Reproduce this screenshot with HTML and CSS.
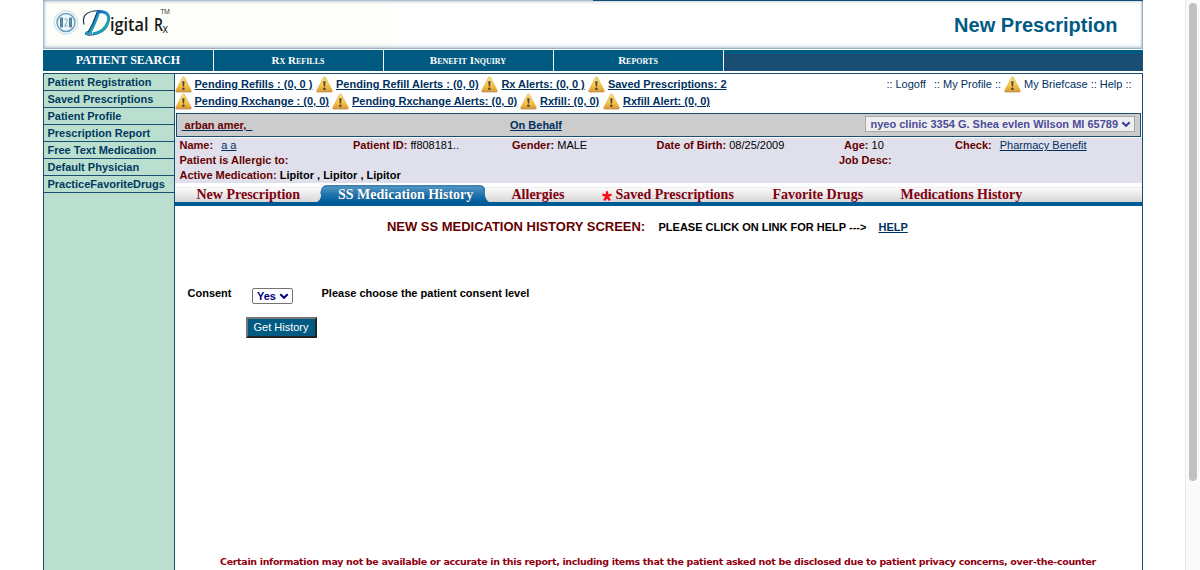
FILE: index.html
```html
<!DOCTYPE html>
<html lang="en">
<head>
<meta charset="utf-8">
<title>New Prescription</title>
<link rel="stylesheet" href="styles.css">
</head>
<body>
<svg class="defs" width="0" height="0" aria-hidden="true">
  <defs>
    <linearGradient id="amber" x1="0" y1="0" x2="0" y2="1"><stop offset="0" stop-color="#ffe277"/><stop offset=".55" stop-color="#f9c945"/><stop offset="1" stop-color="#e0992b"/></linearGradient>
    <linearGradient id="dee" x1="0" y1="0" x2="1" y2="1"><stop offset="0" stop-color="#1450b0"/><stop offset=".5" stop-color="#1590c5"/><stop offset="1" stop-color="#2fb39a"/></linearGradient>
    <linearGradient id="tab" x1="0" y1="0" x2="0" y2="1"><stop offset="0" stop-color="#5a9cc8"/><stop offset=".5" stop-color="#2577b0"/><stop offset="1" stop-color="#015c99"/></linearGradient>
    <symbol id="warn" viewBox="0 0 17 17"><path d="M7.7 1.2Q8.5.2 9.3 1.2L16.3 14.5Q16.7 15.8 15.5 15.8H1.4Q.2 15.8.7 14.5Z" fill="url(#amber)" stroke="#d9a652" stroke-width=".6"/><path d="M1 15.8H16" stroke="#a9844c" stroke-width=".8"/><path d="M7.2 5.3H9.6L9.1 10.5H7.8Z" fill="#4b4351"/><circle cx="8.4" cy="12.8" r="1.3" fill="#4b4351"/></symbol>
  </defs>
</svg>
<div class="page">
  <header class="banner">
    <svg class="logo" width="130" height="42" viewBox="0 0 130 42">
      <circle cx="23" cy="22.500" r="11.800" fill="#f2f9fc" stroke="#c3ddeb" stroke-width="1"/>
      <circle cx="23" cy="22.500" r="9" fill="#eff6f9" stroke="#6ca0bb" stroke-width="1.500"/>
      <path d="M17.500 18h2v9h-2zM26.500 18h2v9h-2z" fill="#6798ae" stroke="#487b96"/>
      <path d="M21.500 19.500q1.600-1.500 2.600 0q.4 1.500-.8 3.200l-1.600 3.300h2.800" fill="none" stroke="#7fa5b8" stroke-width="1"/>
      <path d="M41 24.500Q38 13 51 11Q67 9.500 66 20Q64.500 32 51 34.500Q43 36 42.500 33.500Q45 30.500 49 33.500" fill="none" stroke="#14385c" stroke-width="1.200"/>
      <path d="M55.500 12Q51 25 47 31.500Q45 34 42.500 33" fill="none" stroke="url(#dee)" stroke-width="3.600"/>
      <path d="M54 11.500Q68.500 11 65 22Q61.500 32 50 34" fill="none" stroke="url(#dee)" stroke-width="3"/>
      <path d="M54 12.500Q50 25 45 32" fill="none" stroke="#102a4b" stroke-width="1"/>
      <text x="67" y="30.500" textLength="38.500" lengthAdjust="spacingAndGlyphs" class="logo-text">igital</text>
      <text x="111" y="30.500" textLength="9" lengthAdjust="spacingAndGlyphs" class="logo-text">R</text>
      <text x="119.500" y="33" textLength="5.500" lengthAdjust="spacingAndGlyphs" class="logo-sub">x</text>
      <text x="117.500" y="14" textLength="9.500" lengthAdjust="spacingAndGlyphs" class="logo-tm">TM</text>
    </svg>
    <h1 class="title">New Prescription</h1>
  </header>
  <nav class="nav">
    <a class="nav-item nav-first"><span>PATIENT SEARCH</span></a><a class="nav-item"><span>Rx Refills</span></a><a class="nav-item"><span>Benefit Inquiry</span></a><a class="nav-item"><span>Reports</span></a><i class="nav-rest"></i>
  </nav>
  <div class="columns">
    <aside class="side">
      <a>Patient Registration</a><a>Saved Prescriptions</a><a>Patient Profile</a><a>Prescription Report</a><a>Free Text Medication</a><a>Default Physician</a><a>PracticeFavoriteDrugs</a>
    </aside>
    <main class="main">
      <div class="top">
        <div class="alerts">
          <div class="alert-row row-one">
            <span class="alert"><svg class="warn"><use href="#warn"/></svg><a>Pending Refills : (0, 0 )</a></span>
            <span class="alert"><svg class="warn"><use href="#warn"/></svg><a>Pending Refill Alerts : (0, 0)</a></span>
            <span class="alert"><svg class="warn"><use href="#warn"/></svg><a>Rx Alerts: (0, 0 )</a></span>
            <span class="alert"><svg class="warn"><use href="#warn"/></svg><a>Saved Prescriptions: 2</a></span>
          </div>
          <div class="alert-row row-two">
            <span class="alert"><svg class="warn"><use href="#warn"/></svg><a>Pending Rxchange : (0, 0)</a></span>
            <span class="alert"><svg class="warn"><use href="#warn"/></svg><a>Pending Rxchange Alerts: (0, 0)</a></span>
            <span class="alert"><svg class="warn"><use href="#warn"/></svg><a>Rxfill: (0, 0)</a></span>
            <span class="alert"><svg class="warn"><use href="#warn"/></svg><a>Rxfill Alert: (0, 0)</a></span>
          </div>
        </div>
        <div class="account"><span>::</span><a class="logoff">Logoff</a><span>::</span><a>My Profile</a><span>::</span><svg class="warn"><use href="#warn"/></svg><a>My Briefcase</a><span>::</span><a>Help</a><span>::</span></div>
      </div>
      <div class="clinic-bar">
        <a class="user">&nbsp;arban amer,&nbsp;&nbsp;</a><a class="behalf">On Behalf</a>
        <div class="clinic"><span>nyeo clinic 3354 G. Shea evlen Wilson MI 65789</span><svg width="10" height="7" viewBox="0 0 10 7"><path d="M1.300 1.300L5 4.800L8.700 1.300" fill="none" stroke="#3c3c96" stroke-width="2"/></svg></div>
      </div>
      <section class="patient">
        <div class="info"><span><b>Name:</b> <a class="name">a a</a></span><span><b>Patient ID:</b> ff808181..</span><span><b>Gender:</b> MALE</span><span><b>Date of Birth:</b> 08/25/2009</span><span><b>Age:</b> 10</span><span><b>Check:</b> <a class="check">Pharmacy Benefit</a></span></div>
        <div class="info second"><b>Patient is Allergic to:</b><b>Job Desc:</b></div>
        <div class="info meds"><b>Active Medication: <em>Lipitor , Lipitor , Lipitor</em></b></div>
      </section>
      <div class="tabs">
        <a>New Prescription</a>
        <a class="active"><svg width="171" height="17" viewBox="0 0 171 17"><path d="M-1 17Q3 15 3 10Q3 .5 8 .5H162Q167 .5 167 5V11Q168 15 171 17Z" fill="url(#tab)"/><path d="M2.800 9Q3.500 .8 8 .8H162Q166 .8 166.500 5" fill="none" stroke="#146297"/></svg><span>SS Medication History</span></a>
        <a>Allergies</a>
        <a class="starred"><svg width="10" height="10" viewBox="0 0 10 10"><path d="M5 .3V5M.5 3.700L5 5L9.500 3.700M2.200 9.300L5 5L7.800 9.300" stroke="#fa0d1b" stroke-width="2.400" fill="none"/></svg><span>Saved Prescriptions</span></a>
        <a>Favorite Drugs</a>
        <a>Medications History</a>
      </div>
      <div class="heading"><h2>NEW SS MEDICATION HISTORY SCREEN:</h2><b>PLEASE CLICK ON LINK FOR HELP ---&gt;</b><a>HELP</a></div>
      <div class="consent"><label>Consent</label><div class="yes"><span>Yes</span><svg width="10" height="7" viewBox="0 0 10 7"><path d="M1.300 1.300L5 4.800L8.700 1.300" fill="none" stroke="#000080" stroke-width="2"/></svg></div><b>Please choose the patient consent level</b></div>
      <button class="get">Get History</button>
      <p class="notice">Certain information may not be available or accurate in this report, including items that the patient asked not be disclosed due to patient privacy concerns, over-the-counter</p>
    </main>
  </div>
</div>
<div class="scroll"><i></i></div>
</body>
</html>
```
FILE: styles.css
```css
* { box-sizing: border-box; }
html, body { height: 570px; overflow: hidden; }
body { margin: 0; display: flex; background: #fff; font: 11px/15px "Liberation Sans", Arial, sans-serif; color: #000; }
.defs { position: absolute; }
a { color: #003060; white-space: nowrap; }
.page { width: 1100px; margin-left: 43px; height: 570px; display: flex; flex-direction: column; flex: none; }
.banner { height: 49px; display: flex; background: linear-gradient(90deg, #fdfef9 350px, #fff 350px); box-shadow: inset 0 -1px 1px #9db6c6, inset -1px 0 2px #7f9eb4, inset 1px 0 3px #8fabc0, inset 0 -2px 4px #cad6de, inset 0 4px 4px -3px #c2d1dc; }
.banner::after { content: ""; flex: none; width: 550px; height: 1px; margin-left: -550px; background: #1a4d72; }
.logo { display: block; }
.logo-text { font: 600 18px "Open Sans", sans-serif; fill: #171717; }
.logo-sub { font: 12px "Open Sans", sans-serif; fill: #171717; }
.logo-tm { font: 7.5px "Open Sans", sans-serif; fill: #222; }
.title { margin: 12px 25.5px 0 auto; font: bold 20px/26px "Liberation Sans", Arial, sans-serif; color: #005a82; }
.nav { height: 21px; margin-top: 1px; display: flex; background: #1a4d72; }
.nav-item { width: 170px; padding-right: 1px; border-right: 1px solid #fff; background: #005a82; text-align: center; color: #fff; font: bold 11px/21px "Liberation Serif", serif; font-variant: small-caps; }
.nav-first { width: 171px; padding-right: 0; font-size: 12px; font-variant: normal; }
.nav-rest { flex: 1; border-top: 4px solid #005a82; }
.columns { flex: 1; margin-top: 2px; display: flex; border: 1px solid #1a4d72; border-bottom: 0; min-height: 0; }
.side { width: 131px; border-right: 1px solid #1a4d72; background: #bbdfce; display: flex; flex-direction: column; }
.side a { height: 17px; border-bottom: 1px solid #1a4d72; padding-left: 3.5px; font-weight: bold; line-height: 17px; color: #003a60; }
.main { flex: 1; display: flex; flex-direction: column; min-width: 0; }
.top { height: 39px; display: flex; justify-content: space-between; padding-top: 2px; }
.alert-row { display: grid; height: 17px; }
.row-one { grid-template-columns: 141px 165.4px 106.5px 150px; }
.row-two { grid-template-columns: 157px 188px 83px 130px; }
.alert { display: flex; align-items: center; gap: 2.5px; }
.alert + .alert { gap: 3px; }
.warn { width: 17px; height: 17px; flex: none; display: block; }
.alert a { font-weight: bold; line-height: 15px; text-decoration: underline; }
.account { height: 17px; display: flex; align-items: center; gap: 3px; margin-right: 10.5px; color: #003060; }
.logoff { margin-right: 5px; }
.clinic-bar { height: 24px; margin: 0 1px; border: 1px solid #1a4d72; background: #ccc; display: flex; align-items: center; font-weight: bold; }
.user { width: 333px; padding-left: 4.5px; color: #600; text-decoration: underline; text-decoration-color: #003060; }
.behalf { text-decoration: underline; }
.clinic { width: 270px; height: 16px; margin: -2px 5px 0 auto; border: 1px solid #a9a9ad; background: #efefef; display: flex; align-items: center; justify-content: space-between; padding: 0 3px 0 4.5px; color: #4b4b9c; white-space: nowrap; }
.patient { height: 45px; margin-top: 1px; background: #dfe0ec; padding-left: 4.5px; }
.info { height: 15px; line-height: 15px; white-space: nowrap; }
.info:first-child { display: grid; grid-template-columns: 173.5px 159px 144.5px 187.5px 111px 1fr; }
.info b { color: #600; }
.info em { color: #000; font-style: normal; }
.info a { text-decoration: underline; }
.name, .check { margin-left: 5px; }
.second { display: grid; grid-template-columns: 659.5px 1fr; }
.tabs { height: 23px; border-bottom: 4px solid #005a96; background: linear-gradient(#fff 0 4px, #eee 4px 5px, #fbfbfb 5px, #d6d6d6 19px); display: grid; grid-template-columns: 121px 194px 90.5px 170.5px 128px 1fr; padding-left: 21.5px; font: bold 14px/19px "Liberation Serif", serif; }
.tabs a { color: #800010; line-height: 24px; }
.tabs .active { display: grid; grid-template-columns: 171px; grid-template-rows: 17px; margin-top: 2px; color: #fff; text-shadow: 0 0 1px #144a73; }
.active svg, .active span { grid-area: 1 / 1; }
.active svg { overflow: visible; }
.active span { padding-left: 20.5px; line-height: 20px; position: relative; }
.starred { display: flex; gap: 4px; }
.starred svg { margin: 8px 0 0 -.5px; }
.heading { display: flex; align-items: center; height: 18px; margin-top: 12px; padding-left: 212px; }
.heading h2 { margin: 0; width: 271.5px; font-size: 13px; line-height: 18px; letter-spacing: -.02px; color: #600; white-space: nowrap; }
.heading b { width: 220px; white-space: nowrap; }
.heading a { font-weight: bold; text-decoration: underline; }
.consent { display: flex; margin: 50px 0 0 12.5px; font-weight: bold; }
.consent label { width: 64.5px; }
.yes { width: 41px; height: 16px; margin: 2px 28.5px 0 0; border: 1px solid #757575; border-radius: 2px; display: flex; align-items: center; justify-content: space-between; padding: 0 3px 0 4px; color: #000080; }
.get { width: 71px; height: 21px; margin: 13px 0 0 71px; padding: 0 1px 2px 0; border: 2px solid; border-color: #767676 #222 #222 #767676; background: #005a82; color: #fff; font: 11px "Liberation Sans", Arial, sans-serif; }
.notice { margin: 217px 0 0 45px; font: bold 9.5px/14px "DejaVu Sans", Verdana, sans-serif; letter-spacing: -.33px; color: #900010; white-space: nowrap; }
.scroll { width: 15px; margin-left: auto; border-left: 1px solid #e8e8e8; background: #fafafa; padding: 3px 0 0 3px; }
.scroll i { display: block; width: 8px; height: 478px; border-radius: 4px; background: #c1c1c1; }
```
